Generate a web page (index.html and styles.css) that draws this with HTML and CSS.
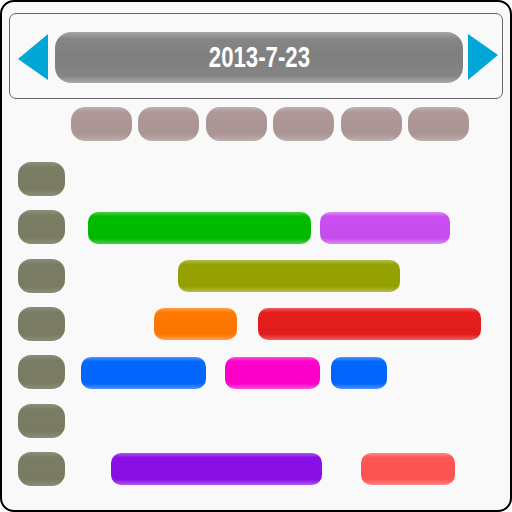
FILE: index.html
```html
<!DOCTYPE html>
<html>
<head>
<meta charset="utf-8">
<link rel="stylesheet" href="styles.css">
</head>
<body>
<div class="frame">
  <div class="header">
    <svg class="tri" width="30" height="46" viewBox="0 0 30 46"><polygon points="30,0 30,46 0,25" fill="#00a6d6"/></svg>
    <div class="date"><span class="date-text">2013-7-23</span></div>
    <svg class="tri" width="30" height="46" viewBox="0 0 30 46"><polygon points="0,0 0,46 30,21" fill="#00a6d6"/></svg>
  </div>
  <div class="days">
    <div class="day"></div><div class="day"></div><div class="day"></div>
    <div class="day"></div><div class="day"></div><div class="day"></div>
  </div>
  <div class="rows">
    <div class="row"><div class="label"></div></div>
    <div class="row"><div class="label"></div>
      <div class="bar green" style="margin-left:23px;width:223px"></div>
      <div class="bar violet" style="margin-left:9px;width:130px"></div>
    </div>
    <div class="row"><div class="label"></div>
      <div class="bar olive" style="margin-left:113px;width:222px"></div>
    </div>
    <div class="row"><div class="label"></div>
      <div class="bar orange" style="margin-left:89px;width:83px"></div>
      <div class="bar red" style="margin-left:21px;width:223px"></div>
    </div>
    <div class="row"><div class="label"></div>
      <div class="bar blue" style="margin-left:16px;width:125px"></div>
      <div class="bar magenta" style="margin-left:19px;width:95px"></div>
      <div class="bar blue" style="margin-left:11px;width:56px"></div>
    </div>
    <div class="row"><div class="label"></div></div>
    <div class="row"><div class="label"></div>
      <div class="bar purple" style="margin-left:46px;width:211px"></div>
      <div class="bar salmon" style="margin-left:39px;width:94px"></div>
    </div>
  </div>
</div>
</body>
</html>
```
FILE: styles.css
```css
html, body {
  margin: 0;
  padding: 0;
  background: #ffffff;
}
.frame {
  box-sizing: border-box;
  width: 512px;
  height: 512px;
  border: 2px solid #000;
  border-radius: 14px;
  background: #f9f9f9;
  padding-top: 11px;
  padding-left: 7px;
}
.header {
  box-sizing: border-box;
  width: 494px;
  height: 86px;
  border: 1px solid #666;
  border-radius: 7px;
  display: flex;
  align-items: center;
  padding-left: 8px;
  padding-top: 2px;
}
.tri { display: block; flex: none; }
.date {
  width: 408px;
  height: 51px;
  margin: 0 5px 0 7px;
  border-radius: 16px;
  background: linear-gradient(to bottom, #a6a6a6 0%, #858585 14%, #7f7f7f 50%, #858585 86%, #a8a8a8 100%);
  display: flex;
  align-items: center;
  justify-content: center;
  flex: none;
}
.date-text {
  display: inline-block;
  color: #fff;
  font-family: "Liberation Sans", Arial, sans-serif;
  font-weight: bold;
  font-size: 30px;
  line-height: 1;
  transform: scaleX(0.74);
  margin-left: 1px;
}
.days {
  display: flex;
  gap: 6.4px;
  margin-top: 8px;
  margin-left: 62px;
}
.day {
  width: 61px;
  height: 34px;
  border-radius: 14px;
  background: linear-gradient(to bottom, #c2b0b0 0%, #ae9797 16%, #ab9494 80%, #c0afaf 100%);
}
.rows {
  display: flex;
  flex-direction: column;
  gap: 14.33px;
  margin-top: 21px;
  margin-left: 9px;
}
.row {
  display: flex;
  align-items: center;
  height: 34px;
}
.label {
  flex: none;
  width: 47px;
  height: 34px;
  border-radius: 13px;
  background: linear-gradient(to bottom, #8e8f78 0%, #7b7c64 16%, #797a62 80%, #8d8e78 100%);
}
.bar {
  flex: none;
  height: 32px;
  border-radius: 10px;
  margin-top: 1px;
}
.green { background: linear-gradient(to bottom, #4ccc4c 0%, #00bd00 14%, #00b800 82%, #4ccc4c 100%); }
.violet { background: linear-gradient(to bottom, #dc8cf6 0%, #c94ff0 14%, #c64cee 82%, #da8af4 100%); }
.olive { background: linear-gradient(to bottom, #b4bc4c 0%, #96a200 14%, #939f00 82%, #b4bc4c 100%); }
.orange { background: linear-gradient(to bottom, #ffa04c 0%, #ff7800 14%, #fb7500 82%, #ffa04c 100%); }
.red { background: linear-gradient(to bottom, #ee6060 0%, #e51d1d 14%, #e11b1b 82%, #ee6060 100%); }
.blue { background: linear-gradient(to bottom, #4c94ff 0%, #0068ff 14%, #0064fa 82%, #4c94ff 100%); }
.magenta { background: linear-gradient(to bottom, #ff4cdc 0%, #ff00cc 14%, #fa00c8 82%, #ff4cdc 100%); }
.purple { background: linear-gradient(to bottom, #ac58f0 0%, #8a10e8 14%, #870fe3 82%, #ac58f0 100%); }
.salmon { background: linear-gradient(to bottom, #ff8888 0%, #ff5555 14%, #fb5252 82%, #ff8888 100%); }
```
